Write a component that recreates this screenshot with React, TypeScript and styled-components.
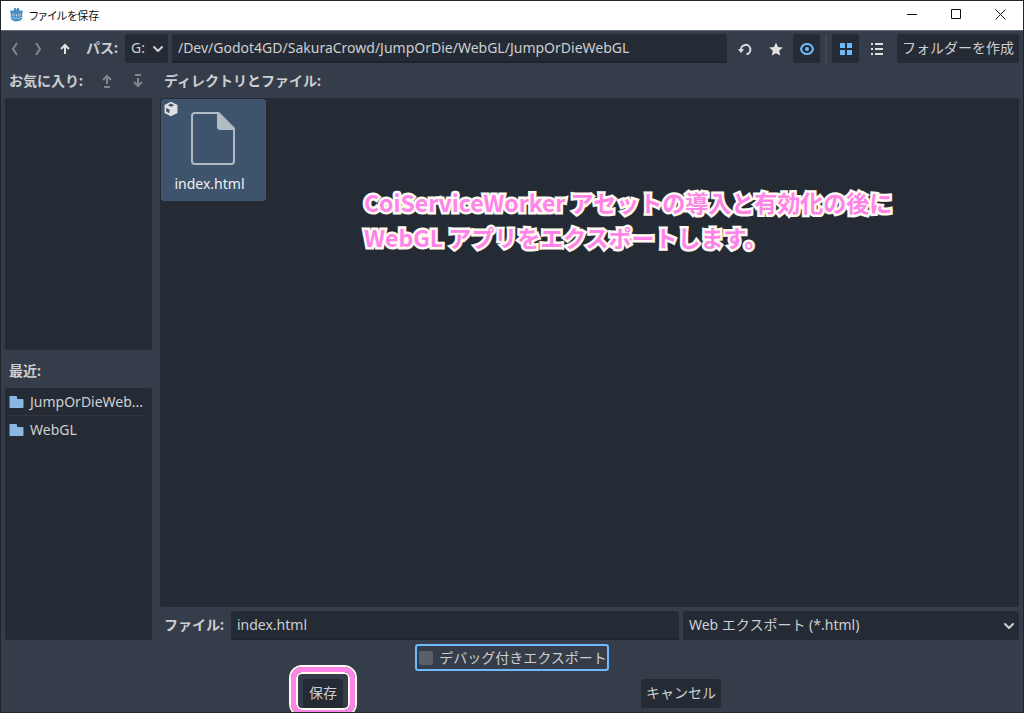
import React from "react";
import styled, { createGlobalStyle } from "styled-components";

const color = {
  base: "#363d4a",
  dark: "#252b34",
  edge: "#1f242c",
  text: "#cdcfd2",
  icon: "#e0e0e0",
  accent: "#70bafa",
  selected: "#3e546c",
  pink: "#ff84ea",
  cream: "#fffaf2",
};

const GlobalStyle = createGlobalStyle`
  *, *::before, *::after { box-sizing: border-box; }
  body { margin: 0; background: ${color.base}; }
  body, button, input, select {
    font-family: "Noto Sans", "Noto Sans CJK JP", sans-serif;
    font-size: 14px;
    line-height: 20px;
    color: ${color.text};
  }
`;

const Window = styled.div`
  position: relative;
  display: flex;
  flex-direction: column;
  min-height: 100vh;
  overflow: hidden;
  border: 1px solid #22252c;
  background: ${color.base};
`;

const TitleBar = styled.header`
  display: flex;
  align-items: center;
  height: 30px;
  padding: 0 1px 2px 8px;
  background: #fff;
  border-bottom: 1px solid #656a75;
`;

const Title = styled.h1`
  flex: 1;
  margin: 0 0 0 5px;
  font-family: "Noto Sans CJK JP", sans-serif;
  font-feature-settings: "palt";
  font-size: 11px;
  font-weight: 400;
  color: #111;
`;

const CaptionButton = styled.button`
  display: grid;
  place-items: center;
  width: 44px;
  height: 27px;
  padding: 0;
  border: 0;
  background: transparent;
`;

const Body = styled.main`
  flex: 1;
  display: flex;
  flex-direction: column;
  gap: 4px;
  padding: 3px 4px 4px;
`;

const Toolbar = styled.div`
  display: flex;
  align-items: center;
  gap: 4px;
  height: 29px;
`;

const IconButton = styled.button<{ $active?: boolean; $narrow?: boolean }>`
  flex: none;
  display: grid;
  place-items: center;
  width: ${(p) => (p.$narrow ? 19 : 27)}px;
  height: 29px;
  padding: 0;
  border: 0;
  border-radius: 3px;
  background: ${(p) => (p.$active ? color.dark : "transparent")};
  color: ${(p) => (p.$active ? color.accent : color.icon)};

  &:disabled {
    color: #82868e;
  }
`;

const Divider = styled.span`
  width: 2px;
  height: 28px;
  margin: 0 1px;
  background: #414855;
`;

const Label = styled.label`
  padding: 0 3px 2px 4px;
  font-weight: 700;
  white-space: nowrap;
`;

const Heading = styled.h2`
  margin: 0;
  padding: 0 4px;
  font-size: 14px;
  font-weight: 700;
  white-space: nowrap;
`;

const Field = styled.input`
  flex: 1;
  min-width: 0;
  height: 29px;
  padding: 0 6px;
  border: 0;
  border-bottom: 2px solid ${color.edge};
  border-radius: 3px 3px 0 0;
  outline: 0;
  background: ${color.dark};
`;

const SelectBox = styled.div`
  position: relative;
  min-width: 43px;
`;

const Select = styled.select`
  appearance: none;
  display: block;
  width: 100%;
  height: 29px;
  padding: 0 20px 1px 6px;
  border: 0;
  border-radius: 3px;
  background: ${color.dark};
`;

const SelectArrow = styled.svg`
  position: absolute;
  right: 3px;
  top: 8px;
  pointer-events: none;
`;

const PushButton = styled.button<{ $apart?: boolean }>`
  position: relative;
  flex: none;
  min-width: 40px;
  height: 29px;
  margin-left: ${(p) => (p.$apart ? 3 : 0)}px;
  padding: 0 5px 2px;
  border: 0;
  border-radius: 3px;
  background: ${color.dark};
  white-space: nowrap;
`;

const Split = styled.div`
  flex: 1;
  display: grid;
  grid-template-columns: 147px minmax(0, 1fr);
  gap: 8px;
`;

const Column = styled.section`
  display: flex;
  flex-direction: column;
  gap: 4px;
  min-width: 0;
`;

const ColumnHeader = styled.div<{ $tall?: boolean }>`
  display: flex;
  align-items: ${(p) => (p.$tall ? "flex-end" : "center")};
  justify-content: space-between;
  height: ${(p) => (p.$tall ? 30 : 27)}px;
  padding-bottom: ${(p) => (p.$tall ? 3 : 0)}px;
`;

const HeaderTools = styled.div`
  display: flex;
  gap: 4px;
  padding-right: 1px;
`;

const SideList = styled.ul`
  flex: 1 1 0;
  margin: 0;
  padding: 0 8px 0 4px;
  list-style: none;
  border-radius: 3px;
  background: ${color.dark};
`;

const SideItem = styled.li`
  & + & {
    border-top: 1px solid #303641;
  }
`;

const SideButton = styled.button`
  display: flex;
  align-items: center;
  gap: 6px;
  width: 100%;
  height: 27px;
  padding: 0;
  border: 0;
  background: transparent;
  white-space: nowrap;
`;

const FileArea = styled.div`
  position: relative;
  flex: 1;
  padding: 1px;
  border-radius: 3px;
  background: ${color.dark};
`;

const FileTile = styled.button`
  position: relative;
  display: flex;
  flex-direction: column;
  align-items: center;
  width: 105px;
  height: 102px;
  padding: 7px 1px 0 0;
  border: 1px solid #40586f;
  border-radius: 3px;
  background: ${color.selected};
  color: #f0f0f0;
`;

const FileName = styled.span`
  margin-top: 3px;
  padding-right: 7px;
`;

const TypeBadge = styled.svg`
  position: absolute;
  left: 1px;
  top: 1px;
`;

const Note = styled.p`
  position: absolute;
  left: 204px;
  top: 87px;
  margin: 0;
  font-family: "Noto Sans CJK JP", sans-serif;
  font-size: 23px;
  font-weight: 700;
  line-height: 35px;
  color: ${color.pink};
  white-space: nowrap;
  -webkit-text-stroke: 5px ${color.cream};
  paint-order: stroke fill;
  stroke-linejoin: round;
`;

const FileRow = styled.div`
  display: grid;
  grid-template-columns: auto 4fr 3fr;
  align-items: center;
  column-gap: 4px;
`;

const OptionRow = styled.div`
  display: flex;
  justify-content: center;
`;

const CheckLabel = styled.label`
  display: flex;
  align-items: center;
  gap: 6px;
  height: 27px;
  padding-left: 2px;
  border: 2px solid ${color.accent};
  border-radius: 3px;
`;

const CheckBox = styled.input`
  appearance: none;
  width: 14px;
  height: 14px;
  margin: 0;
  border-radius: 2px;
  background: #5a606a;
`;

const Actions = styled.footer`
  display: flex;
  justify-content: space-evenly;
  margin-top: 4px;
`;

const Ring = styled.span`
  position: absolute;
  inset: -12px -12px -7px;
  border: 5px solid ${color.pink};
  border-radius: 11px;
  box-shadow: 0 0 0 2px ${color.cream}, inset 0 0 0 2px ${color.cream};
  pointer-events: none;
`;

const Chevron = () => (
  <SelectArrow width="14" height="14" viewBox="0 0 14 14" fill="none" stroke={color.text} strokeWidth="2" strokeLinecap="round" strokeLinejoin="round">
    <path d="M3 5l4 4 4-4" />
  </SelectArrow>
);

const Stroke = ({ d, width = 2 }: { d: string; width?: number }) => (
  <svg width="16" height="16" viewBox="0 0 16 16" fill="none" stroke="currentColor" strokeWidth={width}>
    <path d={d} />
  </svg>
);

const GodotLogo = () => (
  <svg width="15" height="15" viewBox="0 0 15 15">
    <path fill="#478cbf" d="M1 5l1-2 1.500 1 1.300-.8L5 1l2 .2.300 1.200h.5L8 1.200 10 1l.3 2.200 1.200.8L13 3l1 2-.8 1v5.500C12 13.500 10 14.300 7.500 14.300S3 13.500 1.800 11.500V6z" />
    <path fill="none" stroke="#a9d0e8" strokeWidth=".7" d="M2 10.500h2.500v1.300h2v-1h2v1h2v-1.300H13" />
    <circle cx="4.600" cy="8" r="1.400" fill="#b9d6e8" />
    <circle cx="10.400" cy="8" r="1.400" fill="#b9d6e8" />
    <circle cx="4.800" cy="8" r=".7" fill="#5b6670" />
    <circle cx="10.200" cy="8" r=".7" fill="#5b6670" />
    <path stroke="#d8e8f2" d="M7.500 7.500v1.800" />
  </svg>
);

const Folder = () => (
  <svg width="15" height="14" viewBox="0 0 15 14" fill="#8ab8e2">
    <path d="M1 1h6a1 1 0 0 1 1 1v2h5.500a1 1 0 0 1 1 1v7a1 1 0 0 1-1 1H1.500a1 1 0 0 1-1-1V1.500z" />
  </svg>
);

const recent = ["JumpOrDieWeb...", "WebGL"];

export default function App() {
  return (
    <Window>
      <GlobalStyle />
      <TitleBar>
        <GodotLogo />
        <Title>ファイルを保存</Title>
        <CaptionButton aria-label="最小化">
          <svg width="11" height="11" stroke="#111" fill="none"><path d="M0 5.500h10" /></svg>
        </CaptionButton>
        <CaptionButton aria-label="最大化">
          <svg width="11" height="11" stroke="#111" fill="none"><path d="M.5.5h9v9h-9z" /></svg>
        </CaptionButton>
        <CaptionButton aria-label="閉じる">
          <svg width="11" height="11" stroke="#111" fill="none"><path d="M.5.5l10 10M10.500.5l-10 10" /></svg>
        </CaptionButton>
      </TitleBar>

      <Body>
        <Toolbar>
          <IconButton $narrow disabled aria-label="戻る"><Stroke d="M10 2L6 8l4 6" /></IconButton>
          <IconButton $narrow disabled aria-label="進む"><Stroke d="M6 2l4 6-4 6" /></IconButton>
          <IconButton aria-label="上へ"><Stroke d="M8 13V4M4 8l4-4 4 4" /></IconButton>
          <Label htmlFor="path">パス:</Label>
          <SelectBox>
            <Select aria-label="ドライブ"><option>G:</option></Select>
            <Chevron />
          </SelectBox>
          <Field id="path" defaultValue="/Dev/Godot4GD/SakuraCrowd/JumpOrDie/WebGL/JumpOrDieWebGL" />
          <IconButton aria-label="更新">
            <svg width="16" height="16" viewBox="0 0 16 16">
              <path fill="none" stroke="currentColor" strokeWidth="2" d="M4 9a4.700 4.700 0 1 1 5.500 4.200" />
              <path fill="currentColor" d="M.8 8.300h6.400L4 12z" />
            </svg>
          </IconButton>
          <IconButton aria-label="お気に入りに追加">
            <svg width="16" height="16" viewBox="0 0 16 16" fill="currentColor">
              <path d="M8 1.500l2 4.400 4.800.5-3.600 3.300 1 4.800L8 12.200l-4.200 2.300 1-4.800L1.200 6.400 6 5.900z" />
            </svg>
          </IconButton>
          <IconButton $active aria-label="隠しファイルを表示">
            <svg width="16" height="16" viewBox="0 0 16 16">
              <path fill="none" stroke="currentColor" strokeWidth="2" d="M2 8c.8-3.200 3-5 6-5s5.200 1.800 6 5c-.8 3.200-3 5-6 5s-5.200-1.800-6-5z" />
              <circle cx="8" cy="8" r="2" fill="currentColor" />
            </svg>
          </IconButton>
          <Divider />
          <IconButton $active aria-label="サムネイル表示">
            <svg width="14" height="14" viewBox="0 0 14 14" fill="currentColor">
              <path d="M1 1h5v5H1zM8 1h5v5H8zM1 8h5v5H1zM8 8h5v5H8z" />
            </svg>
          </IconButton>
          <IconButton aria-label="リスト表示">
            <svg width="14" height="14" viewBox="0 0 14 14" fill="currentColor">
              <path d="M1 1h2v2H1zM5 1h8v2H5zM1 6h2v2H1zM5 6h8v2H5zM1 11h2v2H1zM5 11h8v2H5z" />
            </svg>
          </IconButton>
          <PushButton $apart>フォルダーを作成</PushButton>
        </Toolbar>

        <Split>
          <Column>
            <ColumnHeader>
              <Heading>お気に入り:</Heading>
              <HeaderTools>
                <IconButton disabled aria-label="上に移動"><Stroke d="M8 11V3M4 7l4-4 4 4M5 14h6" /></IconButton>
                <IconButton disabled aria-label="下に移動"><Stroke d="M8 5v8M4 9l4 4 4-4M5 2h6" /></IconButton>
              </HeaderTools>
            </ColumnHeader>
            <SideList />
            <ColumnHeader $tall><Heading>最近:</Heading></ColumnHeader>
            <SideList>
              {recent.map((name) => (
                <SideItem key={name}>
                  <SideButton><Folder />{name}</SideButton>
                </SideItem>
              ))}
            </SideList>
          </Column>

          <Column>
            <ColumnHeader><Heading>ディレクトリとファイル:</Heading></ColumnHeader>
            <FileArea>
              <FileTile>
                <TypeBadge width="16" height="16" viewBox="0 0 16 16">
                  <path fill={color.icon} d="M8 .8l6.500 3.200v8L8 15.200 1.500 12V4z" />
                  <path fill={color.selected} d="M8 2.600l3.200 1.600L8 5.800 4.800 4.200zM3.200 7l3.200 1.600v3.600L3.200 10.600z" />
                </TypeBadge>
                <svg width="64" height="64" viewBox="0 0 64 64">
                  <path fill="none" stroke="#b1bbc4" strokeWidth="2" d="M37 6H14a3 3 0 0 0-3 3v45a3 3 0 0 0 3 3h36a3 3 0 0 0 3-3V22z" />
                  <path fill="#b1bbc4" d="M36 5h2l16 16v2H39a3 3 0 0 1-3-3z" />
                </svg>
                <FileName>index.html</FileName>
              </FileTile>
              <Note>
                CoiServiceWorker アセットの導入と有効化の後に
                <br />
                WebGL アプリをエクスポートします。
              </Note>
            </FileArea>
            <FileRow>
              <Label htmlFor="file">ファイル:</Label>
              <Field id="file" defaultValue="index.html" />
              <SelectBox>
                <Select aria-label="ファイルの種類"><option>Web エクスポート (*.html)</option></Select>
                <Chevron />
              </SelectBox>
            </FileRow>
          </Column>
        </Split>

        <OptionRow>
          <CheckLabel>
            <CheckBox type="checkbox" />
            デバッグ付きエクスポート
          </CheckLabel>
        </OptionRow>

        <Actions>
          <PushButton>保存<Ring /></PushButton>
          <PushButton>キャンセル</PushButton>
        </Actions>
      </Body>
    </Window>
  );
}
